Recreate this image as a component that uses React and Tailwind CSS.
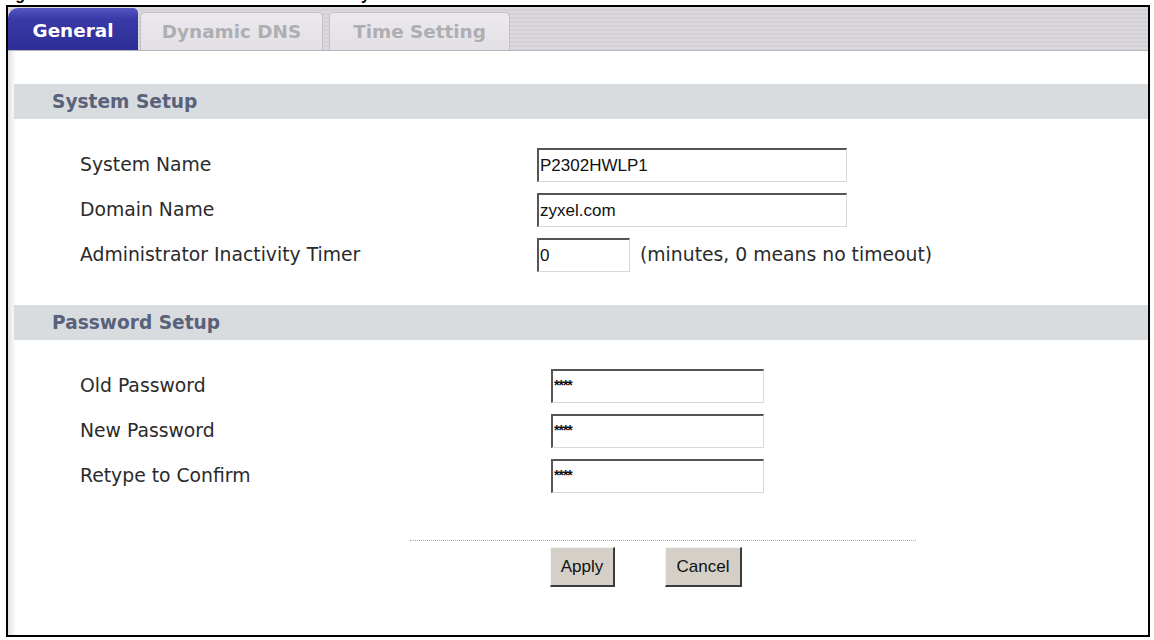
import React from "react";

const labelFont = { fontFamily: '"DejaVu Sans", Verdana, sans-serif' };

function Input({ value, w, mono }) {
  return (
    <div
      className={`${w} h-[34px] bg-white border-t-2 border-l-2 border-[#555555] border-b border-r border-b-[#d8d8d8] border-r-[#d8d8d8] flex items-center pl-[1px] text-[17px] text-[#111] leading-none`}
      style={{ fontFamily: '"Liberation Sans", Arial, sans-serif' }}
    >
      {mono ? <span className="text-[14px] tracking-[-1px] font-bold mt-[-4px]">{value}</span> : value}
    </div>
  );
}

function Row({ label, children, inputLeft }) {
  return (
    <div className="flex items-center h-[34px]">
      <div className="pl-[72px] text-[18.8px] text-[#2b2b2b]" style={{ ...labelFont, width: inputLeft }}>
        {label}
      </div>
      {children}
    </div>
  );
}

function Header({ title }) {
  return (
    <div className="ml-[6px] h-[35px] bg-[#d8dcdf] flex items-center pl-[38px]">
      <span className="font-bold text-[18.6px] text-[#59627a]" style={labelFont}>
        {title}
      </span>
    </div>
  );
}

function Button({ children, w }) {
  return (
    <div
      className={`${w} h-[40px] bg-[#d4d0c8] border-t border-l border-t-[#f4f4f4] border-l-[#f4f4f4] border-b-2 border-r-2 border-b-[#3c3c3c] border-r-[#3c3c3c] flex items-center justify-center text-[17px] text-[#111]`}
      style={{ fontFamily: '"Liberation Sans", Arial, sans-serif' }}
    >
      {children}
    </div>
  );
}

export default function App() {
  return (
    <div className="w-[1154px] h-[640px] bg-white overflow-hidden">
      <div className="h-[5px] overflow-hidden pl-[1px]">
        <div
          className="font-bold text-[16px] leading-[16px] mt-[-13px] text-black whitespace-nowrap"
          style={{ fontFamily: '"Liberation Sans", Arial, sans-serif', wordSpacing: "12px" }}
        >
          Figure 153 Maintenance &gt; General &gt; System
        </div>
      </div>
      <div className="ml-[6px] w-[1144px] h-[632px] border-2 border-black flex flex-col bg-[linear-gradient(90deg,#e2e2e2_0px,#ffffff_8px)]">
        {/* tab bar */}
        <div className="h-[44px] flex items-end bg-[repeating-linear-gradient(180deg,#dbd8de_0px,#dbd8de_2px,#d3d0d8_2px,#d3d0d8_4px)] border-b border-[#b9b5bd]">
          <div
            className="w-[130px] h-[42px] pt-[4px] rounded-tl-[10px] rounded-tr-[5px] bg-[linear-gradient(180deg,#5656c4_0%,#3a3aa8_25%,#2e2e96_100%)] flex items-center justify-center text-white font-bold text-[18.4px]"
            style={labelFont}
          >
            General
          </div>
          <div
            className="ml-[2px] w-[183px] h-[38px] rounded-t-[5px] bg-[linear-gradient(180deg,#eceaee_0%,#e2e0e5_100%)] border border-b-0 border-[#c4c0c8] flex items-center justify-center text-[#aeaeb2] font-bold text-[18.4px]"
            style={labelFont}
          >
            Dynamic DNS
          </div>
          <div
            className="ml-[6px] w-[181px] h-[38px] rounded-t-[5px] bg-[linear-gradient(180deg,#eceaee_0%,#e2e0e5_100%)] border border-b-0 border-[#c4c0c8] flex items-center justify-center text-[#aeaeb2] font-bold text-[18.4px]"
            style={labelFont}
          >
            Time Setting
          </div>
        </div>

        <div className="h-[33px]" />
        <Header title="System Setup" />
        <div className="flex flex-col gap-[11px] pt-[29px]">
          <Row label="System Name" inputLeft={529}>
            <Input value="P2302HWLP1" w="w-[310px]" />
          </Row>
          <Row label="Domain Name" inputLeft={529}>
            <Input value="zyxel.com" w="w-[310px]" />
          </Row>
          <Row label="Administrator Inactivity Timer" inputLeft={529}>
            <Input value="0" w="w-[93px]" />
            <span className="ml-[10px] text-[18.8px] text-[#2b2b2b]" style={labelFont}>
              (minutes, 0 means no timeout)
            </span>
          </Row>
        </div>

        <div className="h-[33px]" />
        <Header title="Password Setup" />
        <div className="flex flex-col gap-[11px] pt-[29px]">
          <Row label="Old Password" inputLeft={543}>
            <Input value="****" w="w-[213px]" mono />
          </Row>
          <Row label="New Password" inputLeft={543}>
            <Input value="****" w="w-[213px]" mono />
          </Row>
          <Row label="Retype to Confirm" inputLeft={543}>
            <Input value="****" w="w-[213px]" mono />
          </Row>
        </div>

        <div className="ml-[402px] mt-[47px] w-[506px] border-t border-dotted border-[#a8a8a8]" />
        <div className="flex pl-[542px] pt-[6px] gap-[50px]">
          <Button w="w-[65px]">Apply</Button>
          <Button w="w-[77px]">Cancel</Button>
        </div>
      </div>
    </div>
  );
}
